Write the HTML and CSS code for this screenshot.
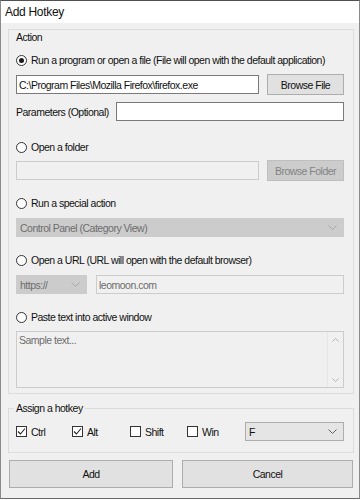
FILE: index.html
```html
<!DOCTYPE html>
<html lang="en">
<head>
    <meta charset="UTF-8">
    <meta name="viewport" content="width=device-width, initial-scale=1.0">
    <title>Add Hotkey</title>
    <link rel="stylesheet" href="styles.css">
</head>
<body>
    <div class="window">
        <div class="titlebar">Add Hotkey</div>
        <div class="content">
            <div class="group action">
                <div class="group-label">Action</div>

                <label class="option first"><span class="radio on"></span>Run a program or open a file (File will open with the default application)</label>
                <div class="row file-row">
                    <input type="text" class="field path" value="C:\Program Files\Mozilla Firefox\firefox.exe">
                    <button class="btn browse">Browse File</button>
                </div>
                <div class="row params-row">
                    <label class="params-label">Parameters (Optional)</label>
                    <input type="text" class="field params">
                </div>

                <label class="option folder"><span class="radio"></span>Open a folder</label>
                <div class="row folder-row">
                    <input type="text" class="field path disabled" disabled>
                    <button class="btn browse disabled" disabled>Browse Folder</button>
                </div>

                <label class="option special"><span class="radio"></span>Run a special action</label>
                <div class="combo disabled wide">
                    <span>Control Panel (Category View)</span>
                    <svg width="9" height="5" viewBox="0 0 9 5"><path d="M0.5 0.5 L4.5 4.5 L8.5 0.5" fill="none" stroke="currentColor"/></svg>
                </div>

                <label class="option url"><span class="radio"></span>Open a URL (URL will open with the default browser)</label>
                <div class="row url-row">
                    <div class="combo disabled proto">
                        <span>https://</span>
                        <svg width="9" height="5" viewBox="0 0 9 5"><path d="M0.5 0.5 L4.5 4.5 L8.5 0.5" fill="none" stroke="currentColor"/></svg>
                    </div>
                    <input type="text" class="field url disabled" value="leomoon.com" disabled>
                </div>

                <label class="option paste"><span class="radio"></span>Paste text into active window</label>
                <div class="textbox">
                    <div class="textbox-text">Sample text...</div>
                    <div class="scrollbar">
                        <svg width="7" height="4" viewBox="0 0 7 4"><path d="M0.5 3.5 L3.5 0.5 L6.5 3.5" fill="none" stroke="currentColor"/></svg>
                        <svg width="7" height="4" viewBox="0 0 7 4"><path d="M0.5 0.5 L3.5 3.5 L6.5 0.5" fill="none" stroke="currentColor"/></svg>
                    </div>
                </div>
            </div>

            <fieldset class="hotkey">
                <legend>Assign a hotkey</legend>
                <div class="keys">
                    <label class="check k-ctrl"><span class="box"><svg width="9" height="9" viewBox="0 0 9 9"><path d="M1 4.5 L3.5 7 L8 1.5" fill="none" stroke="#222" stroke-width="1.1"/></svg></span>Ctrl</label>
                    <label class="check k-alt"><span class="box"><svg width="9" height="9" viewBox="0 0 9 9"><path d="M1 4.5 L3.5 7 L8 1.5" fill="none" stroke="#222" stroke-width="1.1"/></svg></span>Alt</label>
                    <label class="check k-shift"><span class="box"></span>Shift</label>
                    <label class="check k-win"><span class="box"></span>Win</label>
                    <div class="combo key">
                        <span>F</span>
                        <svg width="9" height="5" viewBox="0 0 9 5"><path d="M0.5 0.5 L4.5 4.5 L8.5 0.5" fill="none" stroke="currentColor"/></svg>
                    </div>
                </div>
            </fieldset>

            <div class="buttons">
                <button class="btn big add">Add</button>
                <button class="btn big cancel">Cancel</button>
            </div>
        </div>
    </div>
</body>
</html>
```

FILE: styles.css
```css
body {
    margin: 0;
    background: #ffffff;
    font-family: "Liberation Sans", Arial, sans-serif;
    font-size: 10.5px;
    letter-spacing: -0.5px;
    color: #111;
}
.window {
    width: 358px;
    height: 497px;
    border: 1px solid #8a8a8a;
    border-top-color: #505050;
    border-bottom-color: #6a6a6a;
    background: #f0f0f0;
    display: flex;
    flex-direction: column;
}
.titlebar {
    height: 22px;
    background: #fff;
    font-size: 12px;
    letter-spacing: -0.3px;
    line-height: 23px;
    padding-left: 4px;
}
.content {
    padding: 6px 5px 0 7px;
    display: flex;
    flex-direction: column;
}
.group {
    border: 1px solid #dcdcdc;
    padding: 0 9px 5px 7px;
    display: flex;
    flex-direction: column;
}
.group-label {
    height: 14px;
    line-height: 14px;
}
.option {
    display: flex;
    align-items: center;
    height: 14px;
    line-height: 14px;
    white-space: nowrap;
}
.option.first { margin-top: 9px; }
.option.folder { margin-top: 19px; }
.option.special { margin-top: 15px; }
.option.url { margin-top: 16px; }
.option.paste { margin-top: 16px; }

.radio {
    box-sizing: border-box;
    width: 11px;
    height: 11px;
    border: 1px solid #333;
    border-radius: 50%;
    background: #fff;
    margin-right: 4px;
    display: flex;
    align-items: center;
    justify-content: center;
}
.radio.on::after {
    content: "";
    width: 5px;
    height: 5px;
    border-radius: 50%;
    background: #1a1a1a;
}

.row {
    display: flex;
    align-items: center;
}
.file-row { margin-top: 7px; height: 21px; }
.params-row { margin-top: 7px; height: 19px; }
.folder-row { margin-top: 6px; height: 21px; }
.url-row { margin-top: 8px; height: 19px; justify-content: space-between; }

.field {
    box-sizing: border-box;
    height: 19px;
    border: 1px solid #7a7a7a;
    background: #fff;
    font-family: inherit;
    font-size: 10.5px;
    letter-spacing: -0.5px;
    padding: 0 2px;
    margin: 0;
    color: #111;
}
.field.disabled {
    background: #f0f0f0;
    border-color: #cccccc;
    color: #6d6d6d;
}
.field.path { width: 243px; }
.field.params { width: 228px; margin-left: auto; }
.field.url { width: 248px; }

.params-label {
    line-height: 14px;
    white-space: nowrap;
}

.btn {
    box-sizing: border-box;
    background: #e1e1e1;
    border: 1px solid #adadad;
    font-family: inherit;
    font-size: 10.5px;
    letter-spacing: -0.5px;
    color: #111;
    margin: 0;
    padding: 0;
}
.btn.browse {
    width: 77px;
    height: 21px;
    margin-left: auto;
}
.btn.disabled {
    background: #cccccc;
    border-color: #bfbfbf;
    color: #838383;
}

.combo {
    box-sizing: border-box;
    height: 19px;
    display: flex;
    align-items: center;
    justify-content: space-between;
    padding: 0 6px 0 3px;
    background: #e5e5e5;
    border: 1px solid #adadad;
    color: #606060;
}
.combo span { color: #111; }
.combo.disabled {
    background: #cccccc;
    border-color: #cccccc;
    color: #a8a8a8;
}
.combo.disabled span { color: #6d6d6d; }
.combo.wide { margin-top: 8px; }
.combo.proto { width: 71px; }
.combo.key { width: 99px; }

.textbox {
    box-sizing: border-box;
    margin-top: 7px;
    height: 57px;
    border: 1px solid #cccccc;
    background: #f0f0f0;
    display: flex;
}
.textbox-text {
    flex: 1;
    padding: 2px 2px;
    color: #6d6d6d;
    line-height: 13px;
}
.scrollbar {
    width: 15px;
    border-left: 1px solid #e6e6e6;
    display: flex;
    flex-direction: column;
    justify-content: space-between;
    align-items: center;
    padding: 6px 0 5px;
    color: #b5b5b5;
}

.hotkey {
    margin: 7px 0 0 0;
    padding: 7px 9px 11px 7px;
    border: 1px solid #dcdcdc;
    min-width: 0;
}
.hotkey legend {
    padding: 0 2px;
    margin-left: -2px;
    line-height: 14px;
}
.keys {
    display: flex;
    align-items: center;
    height: 19px;
}
.check {
    display: flex;
    align-items: center;
}
.k-ctrl { width: 56px; }
.k-alt { width: 58px; }
.k-shift { width: 57px; }
.k-win { width: 58px; }
.box {
    box-sizing: border-box;
    width: 11px;
    height: 11px;
    border: 1px solid #333;
    background: #fff;
    margin-right: 4px;
    display: flex;
    align-items: center;
    justify-content: center;
}

.buttons {
    display: flex;
    margin-top: 7px;
    padding-left: 1px;
    gap: 9px;
}
.btn.big { height: 28px; }
.btn.add { width: 164px; }
.btn.cancel { width: 171px; }
```
